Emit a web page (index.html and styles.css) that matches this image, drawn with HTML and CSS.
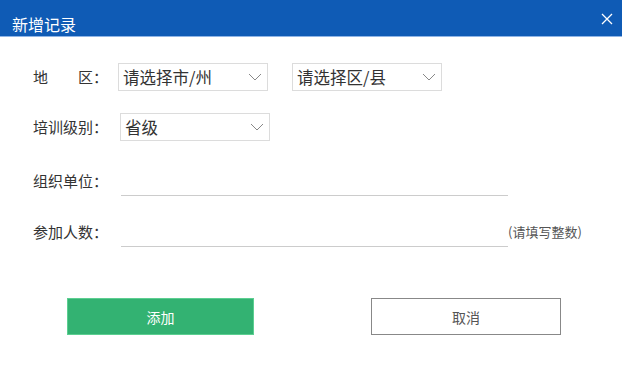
FILE: index.html
```html
<!doctype html>
<html lang="zh-CN">
<head>
    <meta charset="UTF-8">
    <title>新增记录</title>
    <link rel="stylesheet" href="styles.css">
</head>
<body>
<div class="dialog">
    <div class="dialog-head">
        <span class="title">新增记录</span>
        <span class="close">
            <svg width="12" height="12" viewBox="0 0 12 12"><path d="M1 1L11 11M11 1L1 11" stroke="#fff" stroke-width="1.3" fill="none"/></svg>
        </span>
    </div>
    <div class="dialog-body">
        <div class="row row-area">
            <label class="label">地　　区：</label>
            <div class="select sel-city">
                <span>请选择市/州</span>
                <svg class="arrow" width="14" height="8" viewBox="0 0 14 8"><path d="M1 1L7 7L13 1" stroke="#888" stroke-width="1" fill="none"/></svg>
            </div>
            <div class="select sel-county">
                <span>请选择区/县</span>
                <svg class="arrow" width="14" height="8" viewBox="0 0 14 8"><path d="M1 1L7 7L13 1" stroke="#888" stroke-width="1" fill="none"/></svg>
            </div>
        </div>
        <div class="row row-level">
            <label class="label">培训级别：</label>
            <div class="select sel-level">
                <span>省级</span>
                <svg class="arrow" width="14" height="8" viewBox="0 0 14 8"><path d="M1 1L7 7L13 1" stroke="#888" stroke-width="1" fill="none"/></svg>
            </div>
        </div>
        <div class="row row-org">
            <label class="label">组织单位：</label>
            <div class="line-input"></div>
        </div>
        <div class="row row-num">
            <label class="label">参加人数：</label>
            <div class="line-input"></div>
            <span class="hint">(请填写整数)</span>
        </div>
        <div class="btns">
            <div class="btn btn-add">添加</div>
            <div class="btn btn-cancel">取消</div>
        </div>
    </div>
</div>
</body>
</html>
```

FILE: styles.css
```css
*{
    padding: 0;
    margin: 0;
    box-sizing: border-box;
}
body{
    background-color: #ffffff;
    font-family: "Noto Sans CJK SC", "Noto Sans", sans-serif;
    color: #333333;
}
.dialog{
    width: 622px;
    height: 367px;
    background: #ffffff;
}
.dialog-head{
    height: 37px;
    background-color: #0f5bb5;
    border-bottom: 1px solid #8fb5e6;
    display: flex;
    align-items: center;
    justify-content: space-between;
    padding: 11px 9px 0 12px;
}
.title{
    color: #ffffff;
    font-size: 16px;
    line-height: 24px;
}
.close{
    display: flex;
    margin-top: -9px;
}
.dialog-body{
    padding: 26px 0 0 33px;
}
.row{
    display: flex;
    align-items: center;
}
.label{
    width: 85px;
    font-size: 15px;
    line-height: 20px;
    color: #333333;
}
.select{
    height: 28px;
    width: 150px;
    border: 1px solid #dcdcdc;
    display: flex;
    align-items: center;
    justify-content: space-between;
    padding: 0 5px 0 4px;
    font-size: 16.5px;
    color: #333333;
}
.select span{
    line-height: 26px;
}
.sel-county{
    margin-left: 24px;
}
.row-level{
    margin-top: 22px;
}
.row-level .select{
    margin-left: 2px;
}
.row-org{
    margin-top: 26px;
    height: 29px;
}
.row-num{
    margin-top: 22px;
    height: 29px;
}
.line-input{
    width: 387px;
    height: 29px;
    border-bottom: 1px solid #cccccc;
    margin-left: 3px;
}
.row-org .label, .row-num .label{
    margin-top: -2px;
}
.hint{
    font-size: 13px;
    color: #555555;
    align-self: flex-end;
    margin-bottom: 6px;
}
.btns{
    display: flex;
    margin-top: 51px;
    padding-left: 34px;
}
.btn{
    height: 37px;
    width: 187px;
    font-size: 14px;
    display: flex;
    align-items: center;
    justify-content: center;
}
.btn-add{
    background-color: #33b272;
    border: 1px solid #5ccf91;
    color: #ffffff;
}
.btn-cancel{
    margin-left: 117px;
    width: 190px;
    background-color: #ffffff;
    border: 1px solid #888888;
    color: #555555;
}
```
